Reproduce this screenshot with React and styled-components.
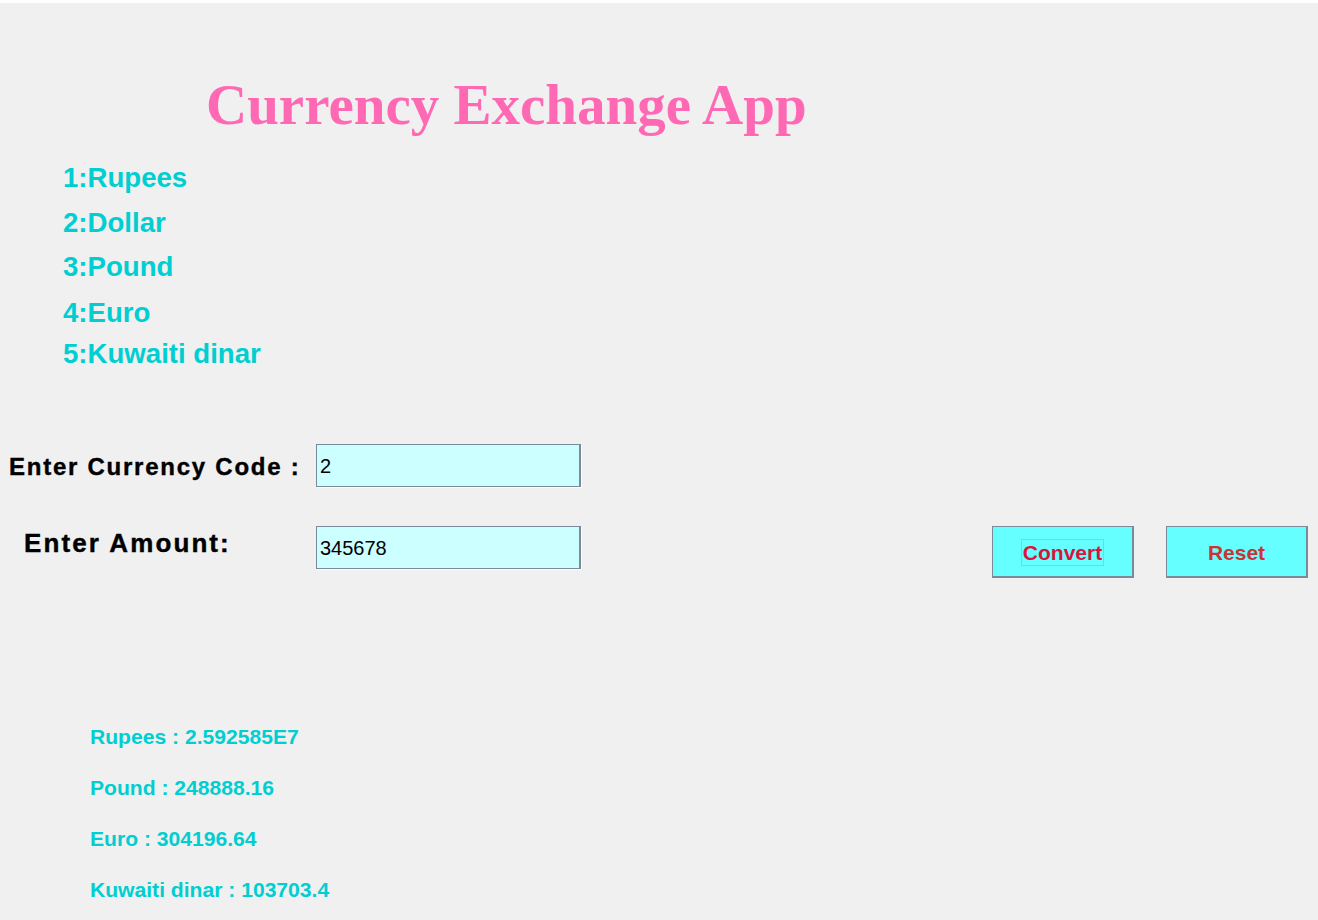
import React from 'react';
import styled, { createGlobalStyle } from 'styled-components';

const currencies = [
  { label: '1:Rupees', top: 0 },
  { label: '2:Dollar', top: 18 },
  { label: '3:Pound', top: 17 },
  { label: '4:Euro', top: 19 },
  { label: '5:Kuwaiti dinar', top: 14 },
];

const results = [
  'Rupees : 2.592585E7',
  'Pound : 248888.16',
  'Euro : 304196.64',
  'Kuwaiti dinar : 103703.4',
];

function App() {
  return (
    <>
      <GlobalStyle />
      <Window>
        <Title>Currency Exchange App</Title>

        <CodeList>
          {currencies.map((c) => (
            <CodeItem key={c.label} $top={c.top}>
              {c.label}
            </CodeItem>
          ))}
        </CodeList>

        <Form>
          <FieldRow>
            <FieldLabel $indent={9} $size={24} $spacing={1.75} $offset={2}>
              Enter Currency Code :
            </FieldLabel>
            <Field defaultValue="2" />
          </FieldRow>

          <FieldRow $top={39} $align="flex-start">
            <FieldLabel $indent={24} $size={26} $spacing={2.1} $offset={4}>
              Enter Amount:
            </FieldLabel>
            <Field defaultValue="345678" />
            <Actions>
              <ActionButton $color="#dc143c">
                <FocusRing>Convert</FocusRing>
              </ActionButton>
              <ActionButton $color="#cc3333">Reset</ActionButton>
            </Actions>
          </FieldRow>
        </Form>

        <Results>
          {results.map((r) => (
            <ResultLine key={r}>{r}</ResultLine>
          ))}
        </Results>
      </Window>
    </>
  );
}

export default App;

const GlobalStyle = createGlobalStyle`
  * { box-sizing: border-box; }
  body {
    margin: 0;
    background: #f0f0f0;
    font-family: "Liberation Sans", Arial, sans-serif;
  }
`;

const Window = styled.div`
  width: 1318px;
  height: 920px;
  overflow: hidden;
  background: #f0f0f0;
  border-top: 3px solid #ffffff;
  padding-top: 73px;
`;

const Title = styled.h1`
  margin: 0 0 0 206px;
  font-family: "Liberation Serif", "Times New Roman", serif;
  font-weight: bold;
  font-size: 57px;
  line-height: 58px;
  color: #ff69b4;
  white-space: nowrap;
`;

const CodeList = styled.ul`
  list-style: none;
  margin: 30px 0 0;
  padding: 0 0 0 63px;
`;

const CodeItem = styled.li`
  margin-top: ${(p) => p.$top}px;
  font-weight: bold;
  font-size: 27.6px;
  line-height: 27px;
  color: #00ced1;
`;

const Form = styled.div`
  margin-top: 77px;
`;

const FieldRow = styled.div`
  display: flex;
  align-items: ${(p) => p.$align || 'center'};
  margin-top: ${(p) => p.$top || 0}px;
`;

const FieldLabel = styled.label`
  width: 316px;
  padding-left: ${(p) => p.$indent}px;
  margin-top: ${(p) => p.$offset || 0}px;
  font-weight: bold;
  font-size: ${(p) => p.$size}px;
  line-height: ${(p) => p.$size}px;
  letter-spacing: ${(p) => p.$spacing}px;
  color: #000;
  -webkit-text-stroke: 0.4px #000;
  white-space: nowrap;
`;

const Field = styled.input`
  width: 265px;
  height: 43px;
  padding: 2px 3px 0;
  background: #ccffff;
  border: 1px solid #7a8a99;
  border-right-width: 2px;
  box-shadow: 1px 1px 0 #ffffff;
  font-family: "Liberation Sans", Arial, sans-serif;
  font-size: 20px;
  color: #000;
  outline: none;
`;

const Actions = styled.div`
  display: flex;
  gap: 32px;
  margin-left: 411px;
`;

const ActionButton = styled.button`
  width: 142px;
  height: 52px;
  display: flex;
  align-items: center;
  justify-content: center;
  padding: 2px 0 0;
  background: #66ffff;
  border: 1px solid #7a8a99;
  border-right-width: 2px;
  border-bottom-width: 2px;
  font-family: "Liberation Sans", Arial, sans-serif;
  font-weight: bold;
  font-size: 21px;
  color: ${(p) => p.$color};
  cursor: pointer;
`;

const FocusRing = styled.span`
  padding: 0 1px;
  line-height: 25px;
  border: 1px solid #b8b4dc;
`;

const Results = styled.div`
  display: flex;
  flex-direction: column;
  gap: 30px;
  margin-top: 148px;
  padding-left: 90px;
`;

const ResultLine = styled.div`
  font-weight: bold;
  font-size: 21.1px;
  line-height: 21px;
  color: #00ced1;
`;
